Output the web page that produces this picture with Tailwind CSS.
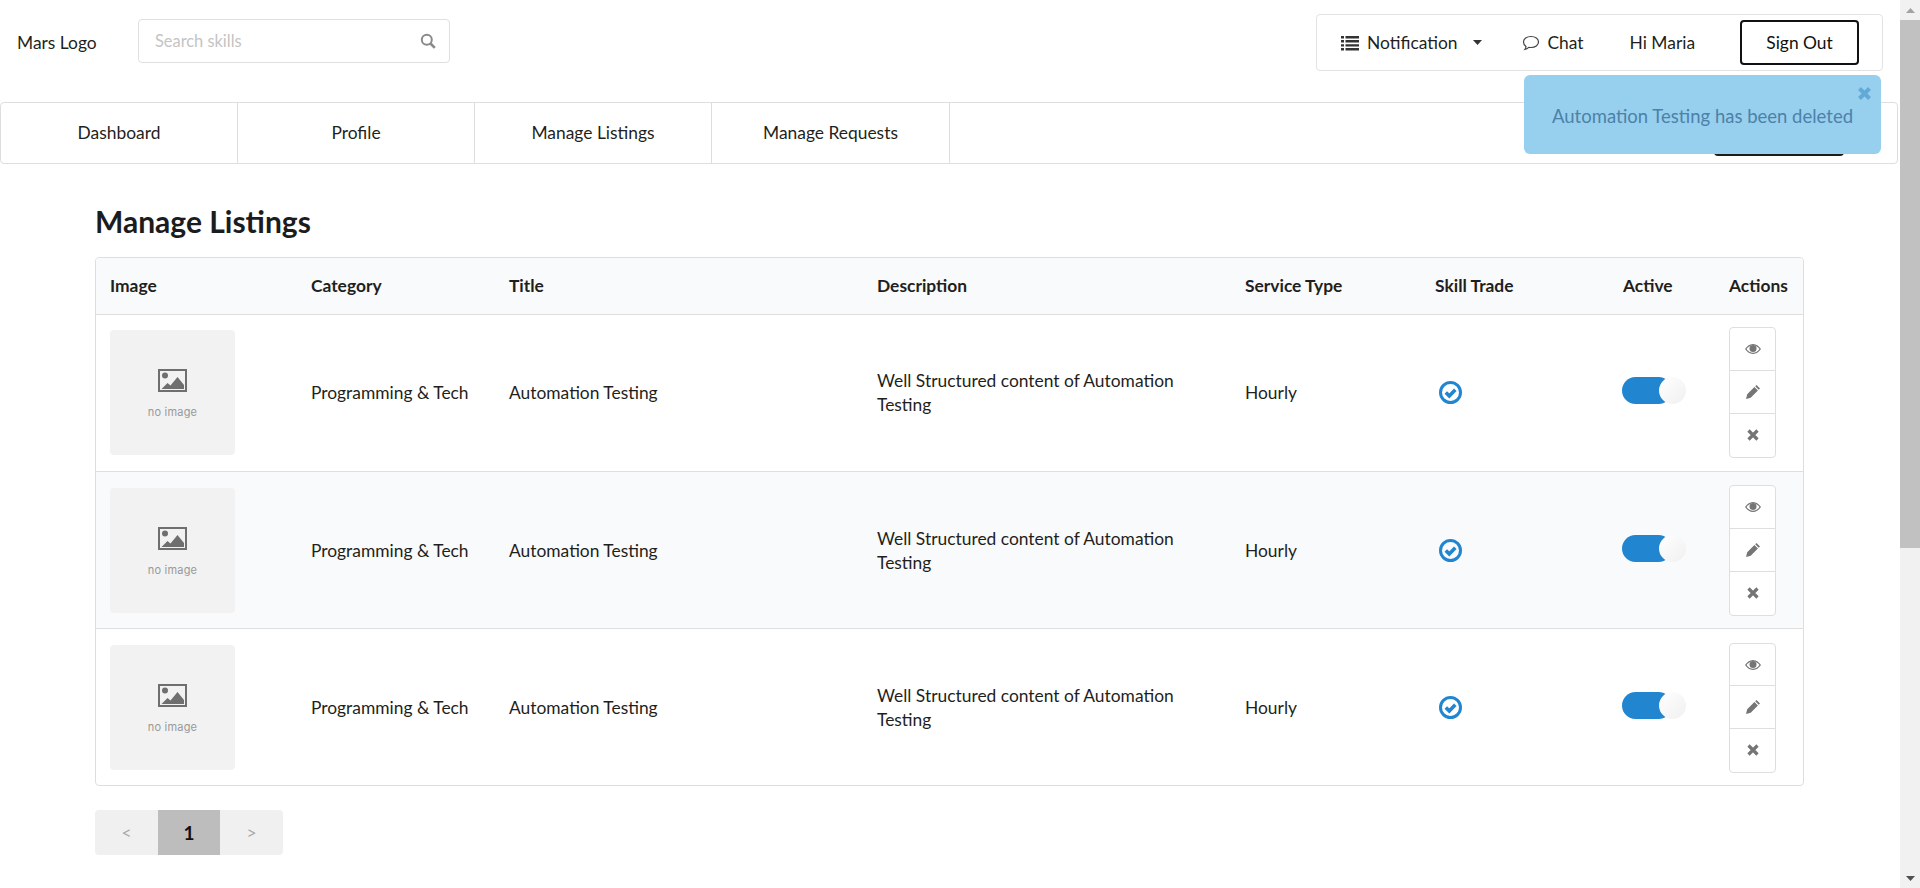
<!DOCTYPE html>
<html lang="en"><head><meta charset="utf-8"><title>Manage Listings</title>
<script src="https://cdn.jsdelivr.net/npm/@tailwindcss/browser@4"></script></head>
<body class="h-[888px] overflow-hidden bg-white font-['Lato',sans-serif] text-[17.4px] text-[#1f1f20]">
<div class="flex h-[888px]">
<div class="relative min-w-0 flex-1">
  <header class="flex h-[102px] items-start">
    <div class="mt-[34px] ml-[17px] w-[121px] leading-[18px]">Mars Logo</div>
    <div class="mt-[19px] flex h-[44px] w-[312px] items-center justify-between rounded border border-[#dfdfdf] pr-[13px] pl-[16px] text-[16.4px] text-[#c4c4c4]">
      <span>Search skills</span>
      <svg class="h-[16px] w-[16px] text-[#8a8a8a]" viewBox="0 0 16 16" fill="none" stroke="currentColor" stroke-width="2"><circle cx="6.8" cy="6.8" r="5"/><path d="M10.5 10.5l4.3 4.3" stroke-width="2.6"/></svg>
    </div>
    <div class="mt-[14px] mr-[17px] ml-auto flex h-[57px] w-[567px] items-center rounded border border-[#e2e2e2] pl-[24px]">
      <svg class="h-[16px] w-[18px] text-[#333]" viewBox="0 0 18 16" fill="currentColor"><path d="M0 1h3v2.400H0zM4.500 1H18v2.400H4.500zM0 5.100h3v2.400H0zM4.500 5.100H18v2.400H4.500zM0 9.200h3v2.400H0zM4.500 9.200H18v2.400H4.500zM0 13h3v2.400H0zM4.500 13H18v2.400H4.500z"/></svg>
      <span class="mt-[1px] ml-[8px]">Notification</span>
      <svg class="ml-[15px] h-[5px] w-[9px] text-[#333]" viewBox="0 0 9 5" fill="currentColor"><path d="M0 0h9L4.500 5z"/></svg>
      <svg class="ml-[40px] h-[18px] w-[18px] text-[#444]" viewBox="0 0 18 18" fill="none" stroke="currentColor" stroke-width="1.200"><path d="M9 2.500c4.300 0 7.500 2.400 7.500 5.500S13.300 13.500 9 13.500c-.8 0-1.500-.1-2.200-.2-.9.900-2.200 1.900-4 2.200.7-.9 1.100-2 1.200-3C2.500 11.500 1.500 9.900 1.500 8 1.500 4.900 4.700 2.500 9 2.500z"/></svg>
      <span class="mt-[1px] ml-[8px]">Chat</span>
      <span class="mt-[1px] ml-[46px]">Hi Maria</span>
      <button class="ml-[45px] flex h-[45px] w-[119px] items-center justify-center rounded border-2 border-[#111] pt-[1px] text-[#111]">Sign Out</button>
    </div>
  </header>
  <nav class="mr-[2px] flex h-[62px] items-center rounded border border-[#dedede] pr-[53px]">
    <a class="flex h-full w-[237px] items-center justify-center border-r border-[#dedede]">Dashboard</a>
    <a class="flex h-full w-[237px] items-center justify-center border-r border-[#dedede]">Profile</a>
    <a class="flex h-full w-[237px] items-center justify-center border-r border-[#dedede]">Manage Listings</a>
    <a class="flex h-full w-[238px] items-center justify-center border-r border-[#dedede]">Manage Requests</a>
    <div class="mt-[1px] ml-auto h-[44px] w-[130px] rounded bg-[#1b1c1d]"></div>
  </nav>
  <main class="pr-[96px] pl-[95px]">
    <h1 class="mt-[38px] mb-[17px] text-[30px] leading-[38px] font-bold text-[#1b1c1d]">Manage Listings</h1>
    <div class="overflow-hidden rounded border border-[#dedede]">
      <table class="w-full table-fixed border-collapse text-left">
        <colgroup><col class="w-[200px]"><col class="w-[198px]"><col class="w-[368px]"><col class="w-[368px]"><col class="w-[190px]"><col class="w-[188px]"><col class="w-[106px]"><col></colgroup>
        <thead class="bg-[#f9fafb] font-bold">
          <tr class="h-[56px]"><th class="pl-[14px]">Image</th><th class="pl-[15px]">Category</th><th class="pl-[15px]">Title</th><th class="pl-[15px]">Description</th><th class="pl-[15px]">Service Type</th><th class="pl-[15px]">Skill Trade</th><th class="pl-[15px]">Active</th><th class="pl-[15px]">Actions</th></tr>
        </thead>
        <tbody class="leading-[24px]">
          <tr class="h-[157px] border-t border-[#dedede]">
            <td class="pl-[14px]"><div class="flex h-[125px] w-[125px] flex-col items-center rounded bg-[#f2f2f2] pt-[39px] text-[#999]"><svg class="h-[23px] w-[29px]" viewBox="0 0 29 23" fill="#6f6f6f"><path d="M0 0h29v23H0zm2 2v19h25V2z" fill-rule="evenodd"/><circle cx="7" cy="6.500" r="3"/><path d="M3.500 20l6-6 3 2.500 7-8.500 6.500 8v4z"/></svg><span class="mt-[13px] font-['Inter',sans-serif] text-[11px] leading-[14px] tracking-[0.2px]">no image</span></div></td>
            <td class="pl-[15px]">Programming &amp; Tech</td><td class="pl-[15px]">Automation Testing</td><td class="pl-[15px] pr-[15px]">Well Structured content of Automation Testing</td><td class="pl-[15px]">Hourly</td>
            <td class="pl-[19px]"><svg class="h-[23px] w-[23px]" viewBox="0 0 23 23" fill="none" stroke="#2185d0"><circle cx="11.500" cy="11.500" r="10" stroke-width="3"/><path d="M6.800 11.500l3.500 3.400 6-6.200" stroke-width="3.600"/></svg></td>
            <td class="pl-[14px]"><div class="relative h-[27px] w-[64px] -translate-y-[2px]"><div class="h-[27px] w-[50px] rounded-full bg-[#2185d0]"></div><div class="absolute top-0 right-0 h-[27px] w-[27px] rounded-full bg-gradient-to-br from-white to-[#f0f0f0]"></div></div></td>
            <td class="pl-[15px]"><div class="flex w-[47px] flex-col divide-y divide-[#dedede] rounded border border-[#dedede] text-[#757575]">
              <span class="flex h-[42.700px] items-center justify-center"><svg class="h-[14px] w-[16px]" viewBox="0 0 16 14" fill="currentColor"><path fill-rule="evenodd" d="M8 2C4.500 2 1.700 4.500 0 7c1.700 2.500 4.500 5 8 5s6.300-2.500 8-5c-1.700-2.500-4.500-5-8-5zM8 3.200C5.300 3.200 3 5 1.500 7c1.500 2 3.800 3.800 6.500 3.800S13 9 14.500 7C13 5 10.700 3.200 8 3.200z"/><circle cx="8" cy="6.500" r="3.500"/></svg></span>
              <span class="flex h-[42.700px] items-center justify-center"><svg class="h-[14px] w-[14px]" viewBox="0 0 14 14" fill="currentColor"><path d="M10.500 0L14 3.500 12.700 4.800 9.200 1.300zM8.400 2.100l3.500 3.500-7.200 7.200L0 14l1.200-4.700z"/></svg></span>
              <span class="flex h-[42.700px] items-center justify-center"><svg class="h-[12px] w-[12px]" viewBox="0 0 12 12" stroke="currentColor" stroke-width="3.200"><path d="M1.500 1.500l9 9M10.500 1.500l-9 9"/></svg></span>
            </div></td>
          </tr>
          <tr class="h-[157px] border-t border-[#dedede] bg-[#f9fafb] [&>td]:pt-[2px]">
            <td class="pl-[14px]"><div class="flex h-[125px] w-[125px] flex-col items-center rounded bg-[#f2f2f2] pt-[39px] text-[#999]"><svg class="h-[23px] w-[29px]" viewBox="0 0 29 23" fill="#6f6f6f"><path d="M0 0h29v23H0zm2 2v19h25V2z" fill-rule="evenodd"/><circle cx="7" cy="6.500" r="3"/><path d="M3.500 20l6-6 3 2.500 7-8.500 6.500 8v4z"/></svg><span class="mt-[13px] font-['Inter',sans-serif] text-[11px] leading-[14px] tracking-[0.2px]">no image</span></div></td>
            <td class="pl-[15px]">Programming &amp; Tech</td><td class="pl-[15px]">Automation Testing</td><td class="pl-[15px] pr-[15px]">Well Structured content of Automation Testing</td><td class="pl-[15px]">Hourly</td>
            <td class="pl-[19px]"><svg class="h-[23px] w-[23px]" viewBox="0 0 23 23" fill="none" stroke="#2185d0"><circle cx="11.500" cy="11.500" r="10" stroke-width="3"/><path d="M6.800 11.500l3.500 3.400 6-6.200" stroke-width="3.600"/></svg></td>
            <td class="pl-[14px]"><div class="relative h-[27px] w-[64px] -translate-y-[2px]"><div class="h-[27px] w-[50px] rounded-full bg-[#2185d0]"></div><div class="absolute top-0 right-0 h-[27px] w-[27px] rounded-full bg-gradient-to-br from-white to-[#f0f0f0]"></div></div></td>
            <td class="pl-[15px]"><div class="flex w-[47px] flex-col divide-y divide-[#dedede] rounded border border-[#dedede] bg-white text-[#757575]">
              <span class="flex h-[42.700px] items-center justify-center"><svg class="h-[14px] w-[16px]" viewBox="0 0 16 14" fill="currentColor"><path fill-rule="evenodd" d="M8 2C4.500 2 1.700 4.500 0 7c1.700 2.500 4.500 5 8 5s6.300-2.500 8-5c-1.700-2.500-4.500-5-8-5zM8 3.200C5.300 3.200 3 5 1.500 7c1.500 2 3.800 3.800 6.500 3.800S13 9 14.500 7C13 5 10.700 3.200 8 3.200z"/><circle cx="8" cy="6.500" r="3.500"/></svg></span>
              <span class="flex h-[42.700px] items-center justify-center"><svg class="h-[14px] w-[14px]" viewBox="0 0 14 14" fill="currentColor"><path d="M10.500 0L14 3.500 12.700 4.800 9.200 1.300zM8.400 2.100l3.500 3.500-7.200 7.200L0 14l1.200-4.700z"/></svg></span>
              <span class="flex h-[42.700px] items-center justify-center"><svg class="h-[12px] w-[12px]" viewBox="0 0 12 12" stroke="currentColor" stroke-width="3.200"><path d="M1.500 1.500l9 9M10.500 1.500l-9 9"/></svg></span>
            </div></td>
          </tr>
          <tr class="h-[157px] border-t border-[#dedede] [&>td]:pt-[2px]">
            <td class="pl-[14px]"><div class="flex h-[125px] w-[125px] flex-col items-center rounded bg-[#f2f2f2] pt-[39px] text-[#999]"><svg class="h-[23px] w-[29px]" viewBox="0 0 29 23" fill="#6f6f6f"><path d="M0 0h29v23H0zm2 2v19h25V2z" fill-rule="evenodd"/><circle cx="7" cy="6.500" r="3"/><path d="M3.500 20l6-6 3 2.500 7-8.500 6.500 8v4z"/></svg><span class="mt-[13px] font-['Inter',sans-serif] text-[11px] leading-[14px] tracking-[0.2px]">no image</span></div></td>
            <td class="pl-[15px]">Programming &amp; Tech</td><td class="pl-[15px]">Automation Testing</td><td class="pl-[15px] pr-[15px]">Well Structured content of Automation Testing</td><td class="pl-[15px]">Hourly</td>
            <td class="pl-[19px]"><svg class="h-[23px] w-[23px]" viewBox="0 0 23 23" fill="none" stroke="#2185d0"><circle cx="11.500" cy="11.500" r="10" stroke-width="3"/><path d="M6.800 11.500l3.500 3.400 6-6.200" stroke-width="3.600"/></svg></td>
            <td class="pl-[14px]"><div class="relative h-[27px] w-[64px] -translate-y-[2px]"><div class="h-[27px] w-[50px] rounded-full bg-[#2185d0]"></div><div class="absolute top-0 right-0 h-[27px] w-[27px] rounded-full bg-gradient-to-br from-white to-[#f0f0f0]"></div></div></td>
            <td class="pl-[15px]"><div class="flex w-[47px] flex-col divide-y divide-[#dedede] rounded border border-[#dedede] text-[#757575]">
              <span class="flex h-[42.700px] items-center justify-center"><svg class="h-[14px] w-[16px]" viewBox="0 0 16 14" fill="currentColor"><path fill-rule="evenodd" d="M8 2C4.500 2 1.700 4.500 0 7c1.700 2.500 4.500 5 8 5s6.300-2.500 8-5c-1.700-2.500-4.500-5-8-5zM8 3.200C5.300 3.200 3 5 1.500 7c1.500 2 3.800 3.800 6.500 3.800S13 9 14.500 7C13 5 10.700 3.200 8 3.200z"/><circle cx="8" cy="6.500" r="3.500"/></svg></span>
              <span class="flex h-[42.700px] items-center justify-center"><svg class="h-[14px] w-[14px]" viewBox="0 0 14 14" fill="currentColor"><path d="M10.500 0L14 3.500 12.700 4.800 9.200 1.300zM8.400 2.100l3.500 3.500-7.200 7.200L0 14l1.200-4.700z"/></svg></span>
              <span class="flex h-[42.700px] items-center justify-center"><svg class="h-[12px] w-[12px]" viewBox="0 0 12 12" stroke="currentColor" stroke-width="3.200"><path d="M1.500 1.500l9 9M10.500 1.500l-9 9"/></svg></span>
            </div></td>
          </tr>
        </tbody>
      </table>
    </div>
    <div class="mt-[24px] flex h-[45px] w-[188px] overflow-hidden rounded bg-[#f0f0f0] text-center leading-[45px]">
      <span class="w-[63px] text-[#a8a8a8]">&lt;</span><span class="w-[62px] bg-[#bdbdbd] text-[19px] font-bold text-[#111]">1</span><span class="w-[63px] text-[#a8a8a8]">&gt;</span>
    </div>
  </main>
  <div class="absolute top-[75px] left-[1524px] h-[79px] w-[357px] rounded-md bg-[#97d0ee] pt-[29px] pl-[28px] text-[18.500px] leading-[24px] text-[#4d81a8]">
    Automation Testing has been deleted
    <svg class="absolute top-[12px] right-[10px] h-[13px] w-[13px]" viewBox="0 0 13 13" stroke="#62a9d6" stroke-width="4"><path d="M1.500 1.500l10 10M11.500 1.500l-10 10"/></svg>
  </div>
</div>
<aside class="flex w-[20px] shrink-0 flex-col bg-[#f1f1f1]">
  <div class="flex h-[20px] items-center justify-center"><svg class="h-[5px] w-[9px]" viewBox="0 0 9 5" fill="#a3a3a3"><path d="M0 5h9L4.500 0z"/></svg></div>
  <div class="h-[528px] bg-[#c1c1c1]"></div>
  <div class="mt-auto flex h-[20px] items-center justify-center"><svg class="h-[5px] w-[9px]" viewBox="0 0 9 5" fill="#505050"><path d="M0 0h9L4.500 5z"/></svg></div>
</aside>
</div>
</body></html>
